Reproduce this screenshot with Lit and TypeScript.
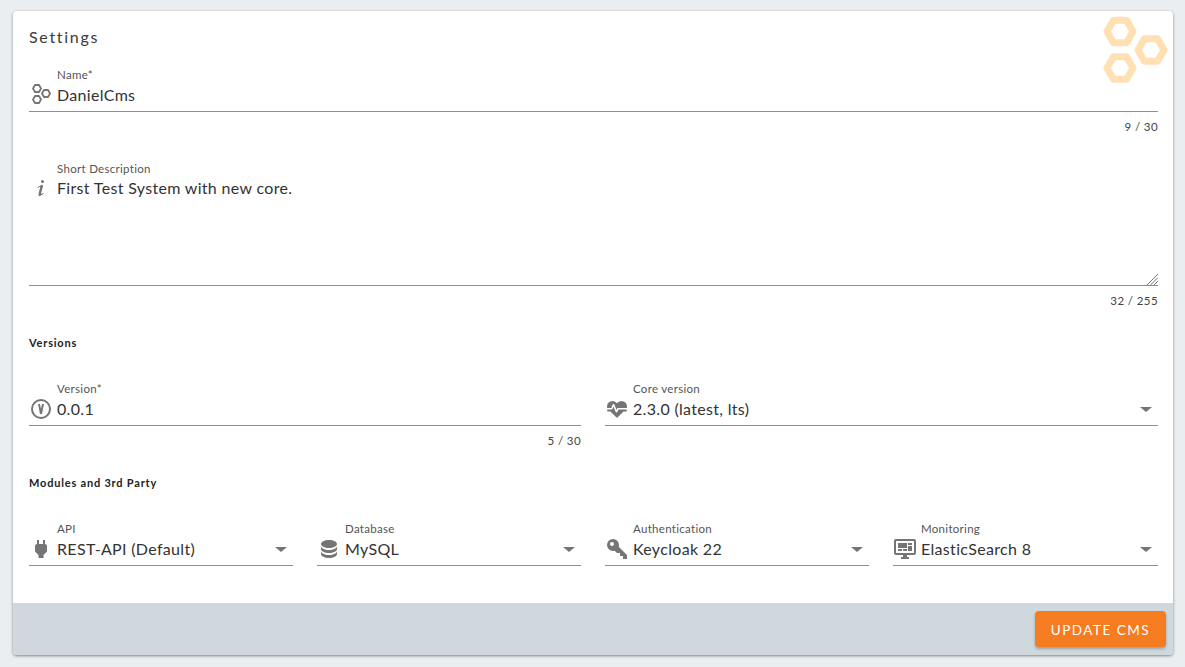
import { LitElement, html, css, svg, nothing } from "lit";
import { customElement, property } from "lit/decorators.js";

const ICONS: Record<string, string> = {
  info: "M13.5,4A1.5,1.5 0 0,0 12,5.5A1.5,1.5 0 0,0 13.5,7A1.5,1.5 0 0,0 15,5.5A1.5,1.5 0 0,0 13.5,4M13.14,8.77C11.95,8.87 8.7,11.46 8.7,11.46C8.5,11.61 8.56,11.6 8.72,11.88C8.88,12.15 8.86,12.17 9.05,12.04C9.25,11.91 9.58,11.7 10.13,11.36C12.25,10 10.47,13.14 9.56,18.43C9.2,21.05 11.56,19.7 12.17,19.3C12.77,18.91 14.38,17.8 14.54,17.69C14.76,17.54 14.6,17.42 14.43,17.17C14.31,17 14.19,17.12 14.19,17.12C13.54,17.55 12.35,18.45 12.19,17.88C12,17.31 13.22,13.4 13.89,10.71C14,10.07 14.3,8.67 13.14,8.77Z",
  version: "M9,7L11,17H13L15,7H13L12,12L11,7H9M12,2A10,10 0 0,1 22,12A10,10 0 0,1 12,22A10,10 0 0,1 2,12A10,10 0 0,1 12,2M12,4A8,8 0 0,0 4,12A8,8 0 0,0 12,20A8,8 0 0,0 20,12A8,8 0 0,0 12,4Z",
  heart: "M7.5,4A5.5,5.5 0 0,0 2,9.5C2,10 2.09,10.5 2.22,11H6.27L7.57,7.54C7.87,6.7 9.05,6.66 9.4,7.5L11.46,12.97L12.09,11.47C12.22,11.17 12.57,11 13,11H21.78C21.91,10.5 22,10 22,9.5A5.5,5.5 0 0,0 16.5,4C14.64,4 13,4.93 12,6.34C11,4.93 9.36,4 7.5,4M3,12.5A1,1 0 0,0 2,13.5A1,1 0 0,0 3,14.5H5.44L11,20C12,20.9 12,20.9 13,20L18.56,14.5H21A1,1 0 0,0 22,13.5A1,1 0 0,0 21,12.5H13.4L12.47,14.8C12.07,15.81 10.92,15.67 10.55,14.83L8.5,9.5L7.54,11.83C7.39,12.21 7.05,12.5 6.6,12.5H3Z",
  plug: "M16,7V3H14V7H10V3H8V7H8C7,7 6,8 6,9V14.5L9.5,18V21H14.5V18L18,14.5V9C18,8 17,7 16,7Z",
  database: "M12,3C7.58,3 4,4.79 4,7C4,9.21 7.58,11 12,11C16.42,11 20,9.21 20,7C20,4.79 16.42,3 12,3M4,9V12C4,14.21 7.58,16 12,16C16.42,16 20,14.21 20,12V9C20,11.21 16.42,13 12,13C7.58,13 4,11.21 4,9M4,14V17C4,19.21 7.58,21 12,21C16.42,21 20,19.21 20,17V14C20,16.21 16.42,18 12,18C7.58,18 4,16.21 4,14Z",
  key: "M22,18V22H18V19H15V16H12L9.74,13.74C9.19,13.91 8.61,14 8,14A6,6 0 0,1 2,8A6,6 0 0,1 8,2A6,6 0 0,1 14,8C14,8.61 13.91,9.19 13.74,9.74L22,18M7,5A2,2 0 0,0 5,7A2,2 0 0,0 7,9A2,2 0 0,0 9,7A2,2 0 0,0 7,5Z",
  monitor: "M21,16V4H3V16H21M21,2A2,2 0 0,1 23,4V16A2,2 0 0,1 21,18H14V20H16V22H8V20H10V18H3C1.89,18 1,17.1 1,16V4C1,2.89 1.89,2 3,2H21M5,6H14V11H5V6M15,6H19V8H15V6M19,9V14H15V9H19M5,12H9V14H5V12M10,12H14V14H10V12Z",
};

function hex(cx: number, cy: number, w: number, h: number) {
  const q = w / 2;
  return `${cx - w},${cy} ${cx - q},${cy - h} ${cx + q},${cy - h} ${cx + w},${cy} ${cx + q},${cy + h} ${cx - q},${cy + h}`;
}

function icon(name: string) {
  if (name === "hexes") {
    return html`<svg class="icon" viewBox="0 0 24 24" aria-hidden="true">
      <g fill="none" stroke="#757575" stroke-width="1.8" stroke-linejoin="round">
        <polygon points=${hex(8, 5.5, 4, 3.5)}></polygon>
        <polygon points=${hex(17, 10.5, 4, 3.5)}></polygon>
        <polygon points=${hex(8, 16.5, 4, 3.5)}></polygon>
      </g>
    </svg>`;
  }
  return html`<svg class="icon" viewBox="0 0 24 24" aria-hidden="true">
    ${svg`<path d=${ICONS[name]} fill="#757575"></path>`}
  </svg>`;
}

@customElement("app-field")
class AppField extends LitElement {
  @property() label = "";
  @property() value = "";
  @property() icon = "";
  @property() counter = "";
  @property({ type: Boolean }) select = false;
  @property({ type: Boolean }) area = false;

  static styles = css`
    :host { display: block; min-width: 0; }
    .label {
      height: 15px;
      line-height: 15px;
      margin-left: 28px;
      font-size: 11.5px;
      letter-spacing: 0.3px;
      color: #555;
      white-space: nowrap;
    }
    .control {
      position: relative;
      display: flex;
      align-items: flex-start;
      height: 28px;
      padding-top: 1px;
      border-bottom: 1px solid #8f8f8f;
    }
    .area .control { height: 109px; padding-top: 0; }
    .icon { width: 24px; height: 24px; flex: none; margin-right: 4px; display: block; }
    .value {
      flex: 1;
      min-width: 0;
      line-height: 24px;
      font-size: 16px;
      letter-spacing: 0.32px;
      color: #333;
      white-space: nowrap;
    }
    .arrow {
      flex: none;
      width: 0;
      height: 0;
      margin: 10px 6px 0 0;
      border-left: 6px solid transparent;
      border-right: 6px solid transparent;
      border-top: 5px solid #757575;
    }
    .grip { position: absolute; right: 0; bottom: 0; width: 11px; height: 11px; display: block; }
    .counter {
      height: 15px;
      margin-top: 7px;
      line-height: 15px;
      text-align: right;
      font-size: 11.5px;
      letter-spacing: 0.4px;
      color: #444;
    }
  `;

  render() {
    return html`<div class=${this.area ? "area" : ""}>
      <div class="label">${this.label}</div>
      <div class="control">
        ${icon(this.icon)}
        <div class="value">${this.value}</div>
        ${this.select ? html`<div class="arrow"></div>` : nothing}
        ${this.area
          ? html`<svg class="grip" viewBox="0 0 11 11" aria-hidden="true">
              <path d="M11 0L0 11M11 3.5L3.5 11M11 7L7 11" stroke="#777" stroke-width="1" fill="none"></path>
            </svg>`
          : nothing}
      </div>
      ${this.counter ? html`<div class="counter">${this.counter}</div>` : nothing}
    </div>`;
  }
}

@customElement("app-root")
class AppRoot extends LitElement {
  static styles = css`
    :host {
      display: block;
      height: 667px;
      box-sizing: border-box;
      padding: 11px 12px 12px 13px;
      background: #eaeef1;
      font-family: "Lato", "Noto Sans", sans-serif;
      overflow: hidden;
    }
    .card {
      position: relative;
      height: 644px;
      display: flex;
      flex-direction: column;
      background: #fff;
      border-radius: 4px;
      overflow: hidden;
      box-shadow: 0 1px 3px rgba(0, 0, 0, 0.45);
    }
    .logo { position: absolute; left: 1089px; top: 4px; width: 68px; height: 70px; }
    .body { flex: 1; padding: 16px 15px 0 16px; }
    .title {
      height: 20px;
      line-height: 20px;
      font-size: 16px;
      letter-spacing: 1.7px;
      color: #3a3a3a;
    }
    .name { margin-top: 20px; }
    .desc { margin-top: 27px; }
    .heading {
      height: 14px;
      line-height: 14px;
      font-size: 11px;
      font-weight: 700;
      letter-spacing: 0.8px;
      color: #222;
    }
    .h-versions { margin-top: 28px; }
    .h-modules { margin-top: 28px; }
    .two { display: grid; grid-template-columns: 552px 553px; gap: 24px; margin-top: 31px; }
    .four { display: grid; grid-template-columns: 264px 264px 264px 265px; gap: 24px; margin-top: 31px; }
    .footer {
      height: 52px;
      flex: none;
      box-sizing: border-box;
      padding: 8px 7px 8px 0;
      display: flex;
      justify-content: flex-end;
      background: #cfd8dc;
    }
    .update {
      width: 131px;
      height: 36px;
      border: 0;
      border-radius: 4px;
      padding: 2px 0 0;
      background: #f57c20;
      color: #fff;
      font: 400 13.5px "Lato", "Noto Sans", sans-serif;
      letter-spacing: 1.5px;
      box-shadow: 0 2px 3px rgba(0, 0, 0, 0.25);
    }
  `;

  render() {
    return html`<div class="card">
      <svg class="logo" viewBox="0 0 68 70" aria-hidden="true">
        <g fill="none" stroke="#ffe0b2" stroke-width="7" stroke-linejoin="round">
          <polygon points=${hex(18, 16.5, 13, 11.3)}></polygon>
          <polygon points=${hex(49, 35, 13, 11.3)}></polygon>
          <polygon points=${hex(18, 53, 13, 11.3)}></polygon>
        </g>
      </svg>
      <div class="body">
        <div class="title">Settings</div>
        <app-field class="name" label="Name*" value="DanielCms" icon="hexes" counter="9 / 30"></app-field>
        <app-field class="desc" area label="Short Description" value="First Test System with new core." icon="info" counter="32 / 255"></app-field>
        <div class="heading h-versions">Versions</div>
        <div class="two">
          <app-field label="Version*" value="0.0.1" icon="version" counter="5 / 30"></app-field>
          <app-field select label="Core version" value="2.3.0 (latest, lts)" icon="heart"></app-field>
        </div>
        <div class="heading h-modules">Modules and 3rd Party</div>
        <div class="four">
          <app-field select label="API" value="REST-API (Default)" icon="plug"></app-field>
          <app-field select label="Database" value="MySQL" icon="database"></app-field>
          <app-field select label="Authentication" value="Keycloak 22" icon="key"></app-field>
          <app-field select label="Monitoring" value="ElasticSearch 8" icon="monitor"></app-field>
        </div>
      </div>
      <div class="footer"><button class="update">UPDATE CMS</button></div>
    </div>`;
  }
}
